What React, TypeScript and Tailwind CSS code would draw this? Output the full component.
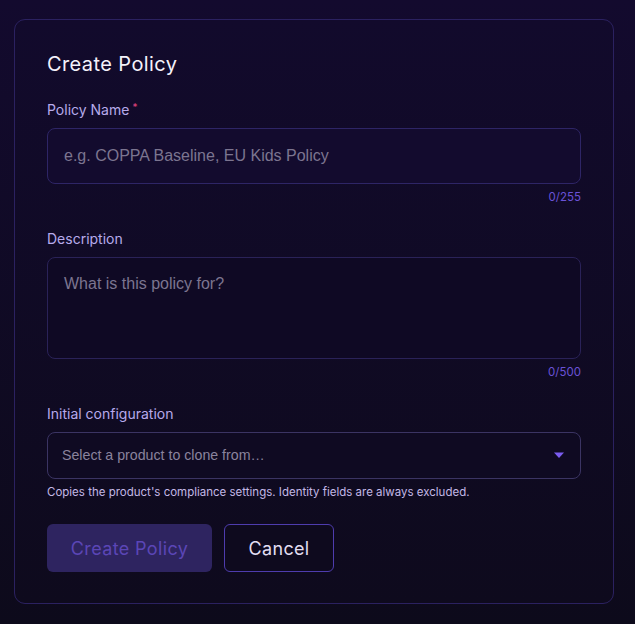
import React from "react";

export default function App() {
  return (
    <div
      className="min-h-[624px] w-[635px] bg-gradient-to-b from-[#130a2e] to-[#0d0a1b] pl-[14px] pt-[19px] pb-[20px]"
      style={{ fontFamily: "Inter, 'Noto Sans', sans-serif" }}
    >
      <div className="w-[600px] rounded-[11px] border border-[#2b2160] bg-gradient-to-b from-[#120a2c] to-[#0e0a1d] px-[32px] pt-[30px] pb-[31px]">
        <h1 className="text-[20px] leading-[28px] text-[#f4f2fb] tracking-[0.02em] font-normal">
          Create Policy
        </h1>

        <div className="mt-[22px]">
          <label className="flex items-start text-[14px] leading-[20px] text-[#b7aaeb]">
            Policy Name
            <span className="ml-[3px] text-[10px] leading-[14px] text-[#e0457d]">*</span>
          </label>
          <input
            className="mt-[8px] block h-[56px] w-full rounded-[8px] border border-[#2e2566] bg-[#130b2e] px-[16px] text-[16px] text-[#e6e2f3] outline-none placeholder:text-[#7c7590]"
            style={{ fontFamily: "'Liberation Sans', Arial, sans-serif" }}
            placeholder="e.g. COPPA Baseline, EU Kids Policy"
          />
          <div className="mt-[5px] text-right text-[11.5px] leading-[16px] text-[#6a52d6]">0/255</div>
        </div>

        <div className="mt-[24px]">
          <label className="block text-[14px] leading-[20px] text-[#b7aaeb]">Description</label>
          <textarea
            className="mt-[8px] block h-[102px] w-full resize-none rounded-[8px] border border-[#2a2258] bg-[#0f0924] px-[16px] pt-[15px] text-[16px] leading-[22px] text-[#e6e2f3] outline-none placeholder:text-[#7c7590]"
            style={{ fontFamily: "'Liberation Sans', Arial, sans-serif" }}
            placeholder="What is this policy for?"
          />
          <div className="mt-[5px] text-right text-[11.5px] leading-[16px] text-[#6a52d6]">0/500</div>
        </div>

        <div className="mt-[24px]">
          <label className="block text-[14px] leading-[20px] text-[#b7aaeb]">Initial configuration</label>
          <div className="mt-[8px] flex h-[47px] w-full items-center justify-between rounded-[8px] border-[1.5px] border-[#3b3463] bg-[#0f0a22] pl-[14px] pr-[14px]">
            <span
              className="text-[14.2px] text-[#8a839d]"
              style={{ fontFamily: "'Liberation Sans', Arial, sans-serif" }}
            >
              Select a product to clone from…
            </span>
            <svg width="12" height="7" viewBox="0 0 12 7" className="mr-[1px]">
              <path d="M1 0.5 H11 L6 6 Z" fill="#7b5cf0" />
            </svg>
          </div>
          <div className="mt-[5px] text-[11.5px] leading-[16px] text-[#c3b8e6]">
            Copies the product's compliance settings. Identity fields are always excluded.
          </div>
        </div>

        <div className="mt-[24px] flex gap-[12px]">
          <button className="h-[48px] w-[165px] rounded-[6px] bg-[#2e2460] text-[18px] tracking-[0.02em] text-[#5b46b6]">
            Create Policy
          </button>
          <button className="h-[48px] w-[110px] rounded-[6px] border border-[#4e3cae] bg-[#0e0a1e] text-[18px] tracking-[0.02em] text-[#e2def2]">
            Cancel
          </button>
        </div>
      </div>
    </div>
  );
}
